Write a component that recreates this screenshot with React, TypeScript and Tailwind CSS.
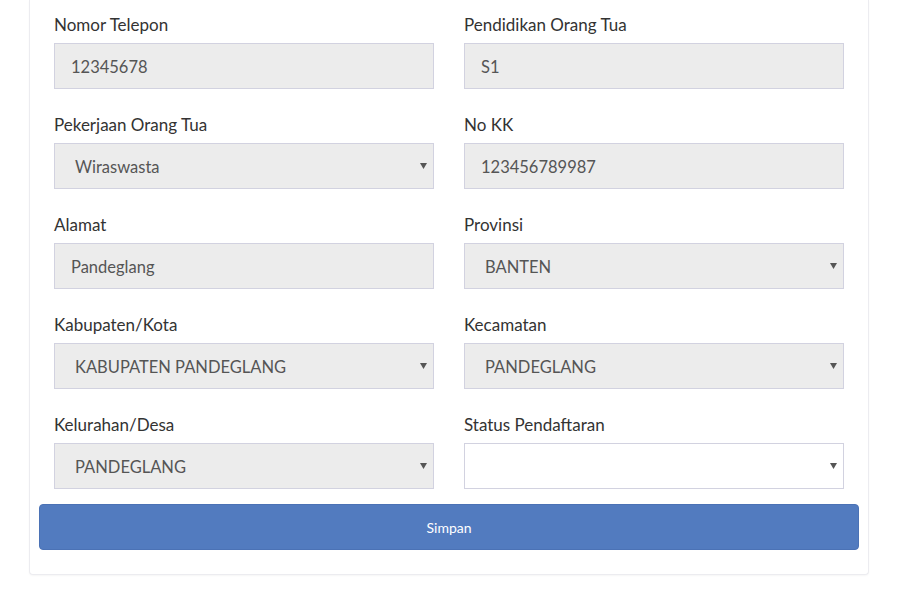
const fields: { label: string; value: string; kind: 'text' | 'select'; filled?: boolean }[] = [
  { label: 'Nomor Telepon', value: '12345678', kind: 'text' },
  { label: 'Pendidikan Orang Tua', value: 'S1', kind: 'text' },
  { label: 'Pekerjaan Orang Tua', value: 'Wiraswasta', kind: 'select' },
  { label: 'No KK', value: '123456789987', kind: 'text' },
  { label: 'Alamat', value: 'Pandeglang', kind: 'text' },
  { label: 'Provinsi', value: 'BANTEN', kind: 'select' },
  { label: 'Kabupaten/Kota', value: 'KABUPATEN PANDEGLANG', kind: 'select' },
  { label: 'Kecamatan', value: 'PANDEGLANG', kind: 'select' },
  { label: 'Kelurahan/Desa', value: 'PANDEGLANG', kind: 'select' },
  { label: 'Status Pendaftaran', value: '', kind: 'select', filled: false },
]

function Caret() {
  return (
    <svg className="h-[6px] w-[7px] text-[#555]" viewBox="0 0 7 6">
      <path d="M0 0h7L3.5 6z" fill="currentColor" />
    </svg>
  )
}

function Field({ label, value, kind, filled = true }: (typeof fields)[number]) {
  return (
    <div className="px-[15px]">
      <div className="mb-[6px] h-[25px] text-[17px] leading-[26px] text-[#333]">{label}</div>
      {kind === 'text' ? (
        <div className="flex h-[46px] items-center border border-[#d2d2e0] bg-[#ececec] px-4 pt-[2px] text-[16.5px] text-[#555]">
          {value}
        </div>
      ) : (
        <div
          className={`flex h-[46px] items-center justify-between border border-[#d2d2e0] pl-5 pr-[6px] text-[16.5px] text-[#555] ${
            filled ? 'bg-[#ececec]' : 'bg-white'
          }`}
        >
          <span className="pt-[2px]">{value}</span>
          <Caret />
        </div>
      )}
    </div>
  )
}

export default function App() {
  return (
    <div
      className="h-[595px] w-[898px] overflow-hidden bg-white pl-[29px]"
      style={{ fontFamily: 'Lato, "Liberation Sans", sans-serif' }}
    >
      <div className="w-[840px] rounded-b border border-t-0 border-[#ececf0] bg-white px-[9px] pb-[24px] pt-3 shadow-[0_1px_2px_rgba(0,0,0,0.04)]">
        <div className="grid grid-cols-2 gap-y-[23px]">
          {fields.map((f) => (
            <Field key={f.label} {...f} />
          ))}
        </div>
        <button className="mt-[15px] flex h-[46px] w-full items-center justify-center rounded border border-[#4b72b5] bg-[#527bbf] text-[14px] text-white">
          Simpan
        </button>
      </div>
    </div>
  )
}
